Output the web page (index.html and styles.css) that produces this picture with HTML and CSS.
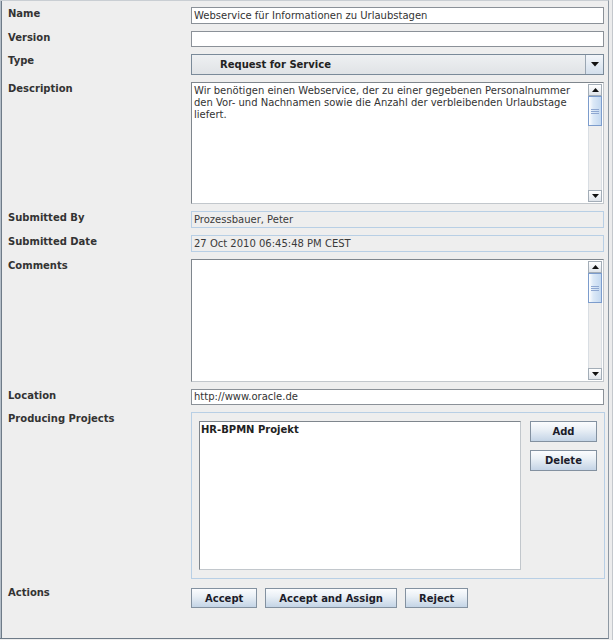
FILE: index.html
```html
<!DOCTYPE html>
<html>
<head>
<meta charset="utf-8">
<link rel="stylesheet" href="styles.css">
</head>
<body>
<div class="page">
  <div class="frame">
    <div class="form">
      <div class="label">Name</div>
      <div class="tf h17">Webservice für Informationen zu Urlaubstagen</div>

      <div class="label">Version</div>
      <div class="tf h16"></div>

      <div class="label">Type</div>
      <div class="combo">
        <div class="combo-text">Request for Service</div>
        <div class="combo-btn">
          <svg width="8" height="5" viewBox="0 0 8 5"><path d="M0 0H8L4 4.5Z" fill="#111"/></svg>
        </div>
      </div>

      <div class="label">Description</div>
      <div class="sbox h122">
        <div class="sbox-text">Wir benötigen einen Webservice, der zu einer gegebenen Personalnummer den Vor- und Nachnamen sowie die Anzahl der verbleibenden Urlaubstage liefert.</div>
        <div class="vsb">
          <div class="sb-btn"><svg width="7" height="4" viewBox="0 0 7 4"><path d="M0 4H7L3.5 0Z" fill="#111"/></svg></div>
          <div class="thumb"><div class="grip"></div></div>
          <div class="track"></div>
          <div class="sb-btn"><svg width="7" height="4" viewBox="0 0 7 4"><path d="M0 0H7L3.5 4Z" fill="#111"/></svg></div>
        </div>
      </div>

      <div class="label">Submitted By</div>
      <div class="tf ro h17">Prozessbauer, Peter</div>

      <div class="label">Submitted Date</div>
      <div class="tf ro h17">27 Oct 2010 06:45:48 PM CEST</div>

      <div class="label">Comments</div>
      <div class="sbox h123">
        <div class="sbox-text"></div>
        <div class="vsb">
          <div class="sb-btn"><svg width="7" height="4" viewBox="0 0 7 4"><path d="M0 4H7L3.5 0Z" fill="#111"/></svg></div>
          <div class="thumb"><div class="grip"></div></div>
          <div class="track"></div>
          <div class="sb-btn"><svg width="7" height="4" viewBox="0 0 7 4"><path d="M0 0H7L3.5 4Z" fill="#111"/></svg></div>
        </div>
      </div>

      <div class="label">Location</div>
      <div class="tf h16">http://www.oracle.de</div>

      <div class="label">Producing Projects</div>
      <div class="panel">
        <div class="list">HR-BPMN Projekt</div>
        <div class="list-btns">
          <button class="btn side-btn">Add</button>
          <button class="btn side-btn">Delete</button>
        </div>
      </div>

      <div class="label label-actions">Actions</div>
      <div class="actions">
        <button class="btn act-btn">Accept</button>
        <button class="btn act-btn">Accept and Assign</button>
        <button class="btn act-btn">Reject</button>
      </div>
    </div>
  </div>
  <div class="side"></div>
</div>
</body>
</html>
```
FILE: styles.css
```css
html, body {
  margin: 0;
  padding: 0;
}
body {
  background: #eeeeee;
  font-family: "DejaVu Sans", sans-serif;
  font-size: 10px;
  color: #333333;
}
.page {
  display: flex;
  width: 613px;
  height: 640px;
}
.frame {
  width: 609px;
  height: 639px;
  box-sizing: border-box;
  background: #eeeeee;
  border-top: 1px solid #c9ced3;
  border-right: 1px solid #8d98a3;
  border-bottom: 1px solid #6e7b88;
  box-shadow: inset 1px 0 0 #b4bec8, inset 2px 0 0 #6e7b88;
  padding: 6px 0 0 8px;
}
.side {
  flex: 1;
  background: #ececec;
  box-shadow: inset -1px 0 0 #c4c8cc;
}
.form {
  display: grid;
  grid-template-columns: 183px 413px;
  row-gap: 7px;
  align-items: start;
}
.label {
  font-weight: bold;
  line-height: 13px;
  color: #333333;
}
.label-actions {
  margin-top: 0;
}
.tf {
  box-sizing: border-box;
  border: 1px solid #8b9198;
  background: #ffffff;
  padding: 0 2px;
  white-space: nowrap;
  overflow: hidden;
  color: #333333;
}
.h17 { height: 17px; line-height: 15px; }
.h16 { height: 16px; line-height: 14px; }
.ro {
  background: #eeeeee;
  border-color: #b8cfe5;
  color: #3a3a3a;
}
.combo {
  box-sizing: border-box;
  height: 21px;
  display: flex;
  border: 1px solid #7a8a99;
  background: linear-gradient(#eef0f2, #e0e3e6);
}
.combo-text {
  flex: 1;
  font-weight: bold;
  line-height: 19px;
  padding-left: 28px;
  color: #222222;
}
.combo-btn {
  width: 17px;
  border-left: 1px solid #9aa6b2;
  background: linear-gradient(#f3f6fa, #d3dfec);
  display: flex;
  align-items: center;
  justify-content: center;
}
.sbox {
  box-sizing: border-box;
  border: 1px solid;
  border-color: #7f868d #c2c7cc #c2c7cc #7f868d;
  background: #ffffff;
  display: flex;
  padding: 1px 1px 1px 1px;
}
.h122 { height: 122px; }
.h123 { height: 123px; }
.sbox-text {
  flex: 1;
  padding: 1px 1px;
  line-height: 12px;
  color: #333333;
}
.vsb {
  width: 14px;
  display: flex;
  flex-direction: column;
  background: #eeeeee;
}
.sb-btn {
  box-sizing: border-box;
  height: 12px;
  border: 1px solid #a3adb7;
  background: linear-gradient(#ffffff, #dfe4ea);
  display: flex;
  align-items: center;
  justify-content: center;
}
.thumb {
  box-sizing: border-box;
  height: 30px;
  border: 1px solid #7c9ccc;
  background: linear-gradient(to right, #ffffff 0%, #dce9f7 35%, #c3d8f0 100%);
  display: flex;
  align-items: center;
  justify-content: center;
}
.grip {
  width: 8px;
  height: 5px;
  background: repeating-linear-gradient(#8ea7d1 0 1px, transparent 1px 2px);
}
.track {
  flex: 1;
  border-left: 1px solid #d9dee3;
  border-right: 1px solid #d9dee3;
}
.panel {
  box-sizing: border-box;
  width: 414px;
  height: 167px;
  border: 1px solid #b8cfe5;
  padding: 8px 7px;
  display: flex;
  gap: 9px;
}
.list {
  box-sizing: border-box;
  width: 322px;
  height: 149px;
  border: 1px solid;
  border-color: #7f868d #c2c7cc #c2c7cc #7f868d;
  background: #ffffff;
  padding: 1px 1px;
  line-height: 14px;
  font-weight: bold;
  color: #222222;
}
.list-btns {
  display: flex;
  flex-direction: column;
  gap: 8px;
}
.btn {
  box-sizing: border-box;
  margin: 0;
  font-family: "DejaVu Sans", sans-serif;
  font-size: 10px;
  font-weight: bold;
  color: #1c1c2a;
  border: 1px solid #8391a0;
  border-radius: 0;
  background: linear-gradient(#fbfcfe 0%, #eaf0f6 40%, #c4d4e6 100%);
  padding: 0 13px;
  cursor: default;
}
.side-btn {
  width: 67px;
  height: 21px;
}
.actions {
  display: flex;
  gap: 8px;
  margin-top: 2px;
}
.act-btn {
  height: 20px;
}
```
